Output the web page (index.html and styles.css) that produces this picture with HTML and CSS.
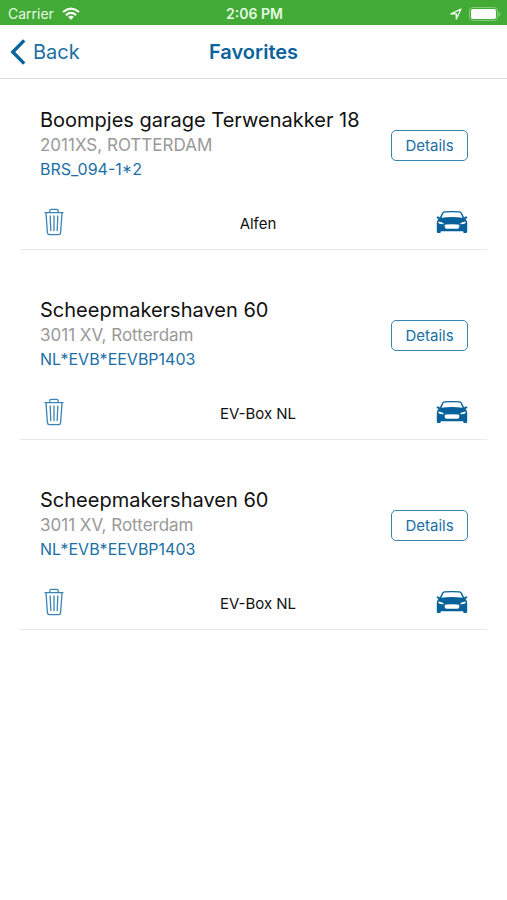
FILE: index.html
```html
<!DOCTYPE html>
<html lang="en">
<head>
<meta charset="utf-8">
<meta name="viewport" content="width=device-width, initial-scale=1">
<title>Favorites</title>
<link rel="stylesheet" href="styles.css">
</head>
<body>
<svg class="sprite" aria-hidden="true">
  <symbol id="trash" viewBox="0 0 20 28">
    <g fill="none" stroke="currentColor" stroke-linecap="round" stroke-linejoin="round">
      <path stroke-width="1.3" d="M1 4.7H19M5.8 4.5V2.8Q5.8 1.3 7.2 1.3H12.8Q14.2 1.3 14.2 2.8V4.5M2 5L3.4 24.6Q3.6 26.6 5.4 26.6H14.6Q16.4 26.6 16.6 24.6L18 5"/>
      <path stroke-width="1.3" d="M6.2 8L6.8 22.5M10 8V22.5M13.8 8L13.2 22.5"/>
    </g>
  </symbol>
  <symbol id="car" viewBox="0 0 32 24">
    <path fill="currentColor" fill-rule="evenodd" d="M6 2.9Q6.8 1.5 8.6 1.3Q16 .6 23.4 1.3Q25.2 1.5 26 2.9L28.2 7.4Q29 6.4 30.6 6.6Q31.8 7 31.2 7.9Q30.6 8.6 29.4 8.7Q31.2 10.4 31.2 13V21.8Q31.2 23 30 23H28.4Q27.2 23 27.2 21.8V21.2H4.8V21.8Q4.8 23 3.6 23H2Q.8 23 .8 21.8V13Q.8 10.4 2.6 8.7Q1.4 8.6 .8 7.9Q.2 7 1.4 6.6Q3 6.4 3.8 7.4ZM7.3 3.6L5.4 7.8Q16 6.4 26.6 7.8L24.7 3.6Q24.2 2.7 23 2.6Q16 2 9 2.6Q7.8 2.7 7.3 3.6ZM2.2 11.4Q2.2 13.4 4.2 13.9L8.2 14.2Q7.4 12.2 2.2 11.4ZM29.8 11.4Q29.8 13.4 27.8 13.9L23.8 14.2Q24.6 12.2 29.8 11.4ZM10 14.6Q8.5 14.8 8.6 16.3L9 17.7Q9.3 18.8 10.6 18.8H21.4Q22.7 18.8 23 17.7L23.4 16.3Q23.5 14.8 22 14.6Q16 14 10 14.6Z"/>
  </symbol>
</svg>
<div class="status">
  <div class="status-left">
    <span>Carrier</span>
    <svg class="wifi" viewBox="0 0 18 13" aria-hidden="true"><g fill="none" stroke="currentColor" stroke-width="2.2"><path d="M1 5Q9-1.8 17 5"/><path d="M4 8.1Q9 3.8 14 8.1"/></g><path fill="currentColor" d="M6.2 9.9Q9 7.7 11.8 9.9L9 12.7Z"/></svg>
  </div>
  <span class="clock">2:06 PM</span>
  <div class="status-right">
    <svg class="locate" viewBox="0 0 12 12" aria-hidden="true"><path fill="none" stroke="currentColor" stroke-width="1.3" stroke-linejoin="round" d="M1 5.9L11 1L6.3 11V5.9Z"/></svg>
    <svg class="battery" viewBox="0 0 32 14" aria-hidden="true"><rect x=".5" y=".5" width="28" height="13" rx="3.5" fill="none" stroke="#86cb7c"/><rect x="2" y="2" width="25" height="10" rx="2" fill="#fff"/><path fill="#86cb7c" d="M29.6 4.5Q31.4 5.3 31.4 7T29.6 9.5Z"/></svg>
  </div>
</div>
<header class="nav">
  <button class="back" type="button">
    <svg class="chevron" viewBox="0 0 16 26" aria-hidden="true"><path fill="none" stroke="currentColor" stroke-width="3.4" d="M14.2 1.4L2.8 13L14.2 24.6"/></svg>
    <span>Back</span>
  </button>
  <h1>Favorites</h1>
</header>
<main class="list">
  <article class="item">
    <div class="top">
      <div class="place">
        <h2>Boompjes garage Terwenakker 18</h2>
        <p class="city">2011XS, ROTTERDAM</p>
        <p class="code">BRS_094-1*2</p>
      </div>
      <button class="details" type="button">Details</button>
    </div>
    <div class="bottom">
      <button class="icon-button" type="button" aria-label="Remove"><svg class="trash"><use href="#trash"/></svg></button>
      <span class="operator">Alfen</span>
      <button class="icon-button end" type="button" aria-label="Navigate"><svg class="car"><use href="#car"/></svg></button>
    </div>
  </article>
  <article class="item">
    <div class="top">
      <div class="place">
        <h2>Scheepmakershaven 60</h2>
        <p class="city">3011 XV, Rotterdam</p>
        <p class="code">NL*EVB*EEVBP1403</p>
      </div>
      <button class="details" type="button">Details</button>
    </div>
    <div class="bottom">
      <button class="icon-button" type="button" aria-label="Remove"><svg class="trash"><use href="#trash"/></svg></button>
      <span class="operator">EV-Box NL</span>
      <button class="icon-button end" type="button" aria-label="Navigate"><svg class="car"><use href="#car"/></svg></button>
    </div>
  </article>
  <article class="item">
    <div class="top">
      <div class="place">
        <h2>Scheepmakershaven 60</h2>
        <p class="city">3011 XV, Rotterdam</p>
        <p class="code">NL*EVB*EEVBP1403</p>
      </div>
      <button class="details" type="button">Details</button>
    </div>
    <div class="bottom">
      <button class="icon-button" type="button" aria-label="Remove"><svg class="trash"><use href="#trash"/></svg></button>
      <span class="operator">EV-Box NL</span>
      <button class="icon-button end" type="button" aria-label="Navigate"><svg class="car"><use href="#car"/></svg></button>
    </div>
  </article>
</main>
</body>
</html>
```
FILE: styles.css
```css
* { box-sizing: border-box; }
body {
  margin: 0;
  background: #fff;
  color: #111;
  font-family: Inter, "Liberation Sans", sans-serif;
  font-size: 16px;
}
h1, h2, p { margin: 0; }
svg { display: block; flex: none; }
button {
  margin: 0;
  padding: 0;
  border: 0;
  background: none;
  color: #1a6fa5;
  font: inherit;
  cursor: pointer;
}
.sprite { position: absolute; width: 0; height: 0; }

.status {
  display: grid;
  grid-template-columns: 1fr auto 1fr;
  align-items: center;
  height: 25px;
  padding: 2px 6px 0 8px;
  background: #42ab35;
  color: #fff;
  font-size: 14px;
  line-height: 20px;
}
.status-left { display: flex; align-items: center; gap: 8px; color: #e6f8e2; }
.status-right { display: flex; align-items: center; justify-content: flex-end; gap: 7px; }
.clock { font-weight: 600; color: #e6f8e2; }
.wifi { width: 18px; height: 13px; color: #fff; }
.locate { width: 12px; height: 12px; }
.battery { width: 32px; height: 14px; }

.nav {
  display: grid;
  grid-template-columns: 1fr auto 1fr;
  align-items: center;
  height: 54px;
  padding: 0 10px;
  border-bottom: 1px solid #dedede;
}
.nav h1 {
  color: #0b639c;
  font-size: 20px;
  font-weight: 600;
  line-height: 24px;
}
.back {
  display: flex;
  align-items: center;
  justify-self: start;
  gap: 7px;
  font-size: 20px;
  line-height: 24px;
}
.chevron { width: 16px; height: 26px; color: #0b639c; }

.list {
  display: flex;
  flex-direction: column;
  gap: 19px;
  padding: 0 20px;
}
.item {
  padding: 28px 19px 13px 20px;
  border-bottom: 1px solid #e8e8e8;
}
.top { display: flex; align-items: center; justify-content: space-between; gap: 12px; }
.place { min-width: 0; line-height: 24px; }
.place h2 { font-size: 20px; font-weight: 400; line-height: 26px; }
.city { color: #999; font-size: 17px; }
.code { color: #1a6fa5; }
.details {
  flex: none;
  width: 77px;
  height: 31px;
  margin-top: 2px;
  border: 1px solid #3584b2;
  border-radius: 5px;
  font-size: 15px;
}
.bottom {
  display: grid;
  grid-template-columns: 1fr auto 1fr;
  align-items: center;
  margin-top: 27px;
  padding-left: 4px;
}
.operator { padding: 4px 0 0 4px; font-size: 15px; line-height: 24px; }
.icon-button { justify-self: start; }
.icon-button.end { justify-self: end; }
.trash { width: 20px; height: 28px; color: #3b84b3; }
.car { width: 32px; height: 24px; color: #07629c; }
```
